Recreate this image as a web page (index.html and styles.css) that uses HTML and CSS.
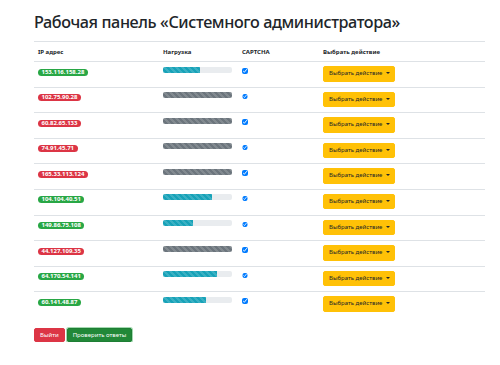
FILE: index.html
```html
<!doctype html>
<html>

<head>
	<meta charset="utf-8" />
	<link rel="stylesheet" href="styles.css">
</head>

<body>

	<div class="page">

		<h1 class="title">Рабочая панель «Системного администратора»</h1>

		<table class="panel">
			<colgroup>
				<col class="col-ip">
				<col class="col-load">
				<col class="col-captcha">
				<col>
			</colgroup>
			<thead>
				<tr>
					<th>IP адрес</th>
					<th>Нагрузка</th>
					<th>CAPTCHA</th>
					<th>Выбрать действие</th>
				</tr>
			</thead>
			<tbody id="rows"></tbody>
		</table>

		<div class="actions">
			<button class="btn btn-danger">Выйти</button>
			<button class="btn btn-success focus">Проверить ответы</button>
		</div>

	</div>

	<script>

		const servers = [
			["153.116.158.28", true, 54],
			["102.75.90.28", false, 100],
			["60.82.65.133", false, 100],
			["74.91.45.71", false, 100],
			["165.33.113.124", false, 100],
			["104.104.40.51", true, 71],
			["149.86.75.108", true, 43],
			["44.127.109.35", false, 100],
			["64.170.54.141", true, 78],
			["60.141.48.87", true, 63]
		];

		const rows = document.getElementById("rows");

		servers.forEach(([ip, ok, load]) => {
			const tr = document.createElement("tr");
			tr.innerHTML =
				'<td><span class="badge ' + (ok ? "badge-success" : "badge-danger") + '">' + ip + '</span></td>' +
				'<td><div class="progress"><div class="bar ' + (ok ? "bar-info" : "bar-grey") + '" style="width:' + load + '%"></div></div></td>' +
				'<td><input type="checkbox" class="check" checked></td>' +
				'<td><button class="btn btn-warning">Выбрать действие<span class="caret"></span></button></td>';
			rows.appendChild(tr);
		});

	</script>

</body>

</html>
```

FILE: styles.css
```css
* {
	box-sizing: border-box;
}

body {
	margin: 0;
	font-family: "Noto Sans", "Open Sans", sans-serif;
	color: #212529;
	background: #fff;
}

.page {
	padding: 11px 15px 0 34px;
}

.title {
	margin: 0 0 8px;
	font-size: 16.2px;
	font-weight: 500;
	line-height: 22px;
	letter-spacing: -0.4px;
	white-space: nowrap;
}

.panel {
	width: 100%;
	border-collapse: collapse;
	table-layout: fixed;
	font-size: 6px;
}

.col-ip {
	width: 125px;
}

.col-load {
	width: 79px;
}

.col-captcha {
	width: 81px;
}

.panel th,
.panel td {
	padding: 4px 4px 0;
	text-align: left;
	vertical-align: top;
	border-top: 1px solid #dee2e6;
}

.panel th {
	padding: 5px 4px 4px;
	font-weight: 700;
	line-height: 10px;
	border-bottom: 1px solid #dee2e6;
}

.panel td {
	height: 25.6px;
}

.badge {
	display: inline-block;
	margin-top: 2.5px;
	padding: 0 3.5px;
	font-size: 6px;
	font-weight: 700;
	line-height: 7px;
	color: #fff;
	border-radius: 4px;
	white-space: nowrap;
}

.badge-success {
	background: #28a745;
}

.badge-danger {
	background: #dc3545;
}

.progress {
	width: 69px;
	height: 6px;
	margin-top: 0.5px;
	overflow: hidden;
	background: #e9ecef;
	border-radius: 2px;
}

.bar {
	height: 100%;
	background-image: linear-gradient(45deg, rgba(255,255,255,.15) 25%, transparent 25%, transparent 50%, rgba(255,255,255,.15) 50%, rgba(255,255,255,.15) 75%, transparent 75%, transparent);
	background-size: 6px 6px;
}

.bar-info {
	background-color: #17a2b8;
}

.bar-grey {
	background-color: #6c757d;
}

.check {
	width: 5.5px;
	height: 5.5px;
	margin: 2px 0 0 0;
	accent-color: #007bff;
}

.btn {
	display: inline-block;
	padding: 0 5px;
	height: 15.5px;
	font-family: inherit;
	font-size: 6px;
	line-height: 13.5px;
	white-space: nowrap;
	border: 1px solid transparent;
	border-radius: 2px;
	cursor: pointer;
}

.btn-warning {
	color: #212529;
	background: #ffc107;
	border-color: #ffc107;
	width: 72px;
	text-align: left;
}

.caret {
	display: inline-block;
	margin-left: 4px;
	vertical-align: 1px;
	border-top: 2px solid #212529;
	border-left: 2px solid transparent;
	border-right: 2px solid transparent;
}

.actions {
	display: flex;
	gap: 2px;
	margin-top: 10.5px;
}

.btn-danger {
	height: 14.5px;
	color: #fff;
	background: #dc3545;
	border-color: #dc3545;
}

.btn-success {
	height: 14.5px;
	color: #fff;
	background: #218838;
	border-color: #1e7e34;
}

.btn-success.focus {
	box-shadow: 0 0 0 1px rgba(72,180,97,.5);
}
```
